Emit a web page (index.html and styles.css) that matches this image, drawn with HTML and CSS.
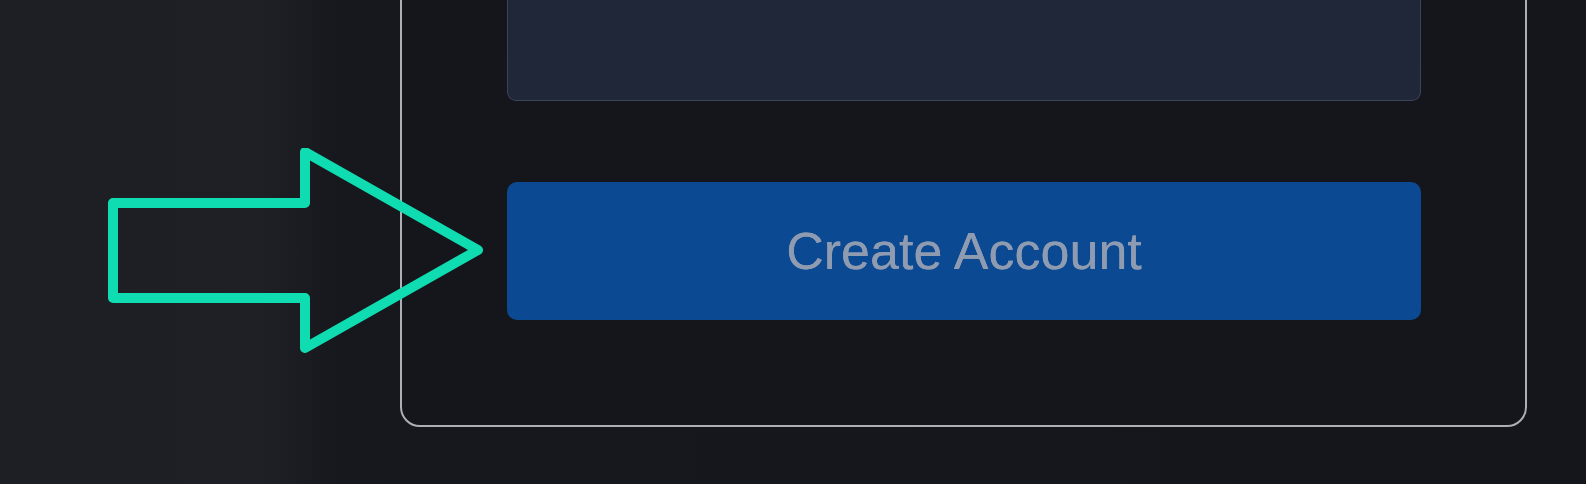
FILE: index.html
```html
<!DOCTYPE html>
<html lang="en">
  <head>
    <meta charset="UTF-8">
    <meta name="viewport" content="width=device-width, initial-scale=1.0">
    <title>Create Account</title>
    <link rel="stylesheet" href="styles.css">
  </head>
  <body>
    <div class="page">
      <form class="card">
        <div class="field"></div>
        <button class="submit" type="button" disabled>Create Account</button>
      </form>

      <!-- pointer drawn over the card edge -->
      <svg class="pointer" width="500" height="230" viewBox="0 0 500 230">
        <polygon points="113,55 305,55 305,4 478,102 305,200 305,150 113,150"
                 fill="none" stroke="#0fdcb1" stroke-width="10" stroke-linejoin="round"/>
      </svg>
    </div>
  </body>
</html>
```

FILE: styles.css
```css
body {
    margin: 0;
    height: 484px;
    overflow: hidden;
    font-family: "Liberation Sans", Arial, sans-serif;
    background: linear-gradient(90deg, #1e1f24 0, #1f2026 260px, #17181e 340px, #15161c 100%);
}

.page {
    position: relative;
    display: flow-root;
    padding-left: 400px;
}

.card {
    width: 1127px;
    margin-top: -121px;
    padding: 0 104px 105px 105px;
    box-sizing: border-box;
    border: 2px solid #aeaeb6;
    border-radius: 20px;
    background-color: #15161c;
    display: flex;
    flex-direction: column;
    gap: 81px;
}

.field {
    height: 219px;
    border: 1.5px solid #3c4457;
    border-top: none;
    border-radius: 0 0 9px 9px;
    background: linear-gradient(180deg, #1f2638 0, #1f2739 100%);
}

.submit {
    height: 138px;
    border: none;
    border-radius: 10px;
    background-color: #0b4a93;
    color: #8f9bb0;
    font-family: "Liberation Sans", Arial, sans-serif;
    font-size: 52px;
    padding: 0;
    text-shadow: 0 0 0.6px #8f9bb0;
}

.pointer {
    position: absolute;
    left: 0;
    top: 148px;
    z-index: 1;
}
```
